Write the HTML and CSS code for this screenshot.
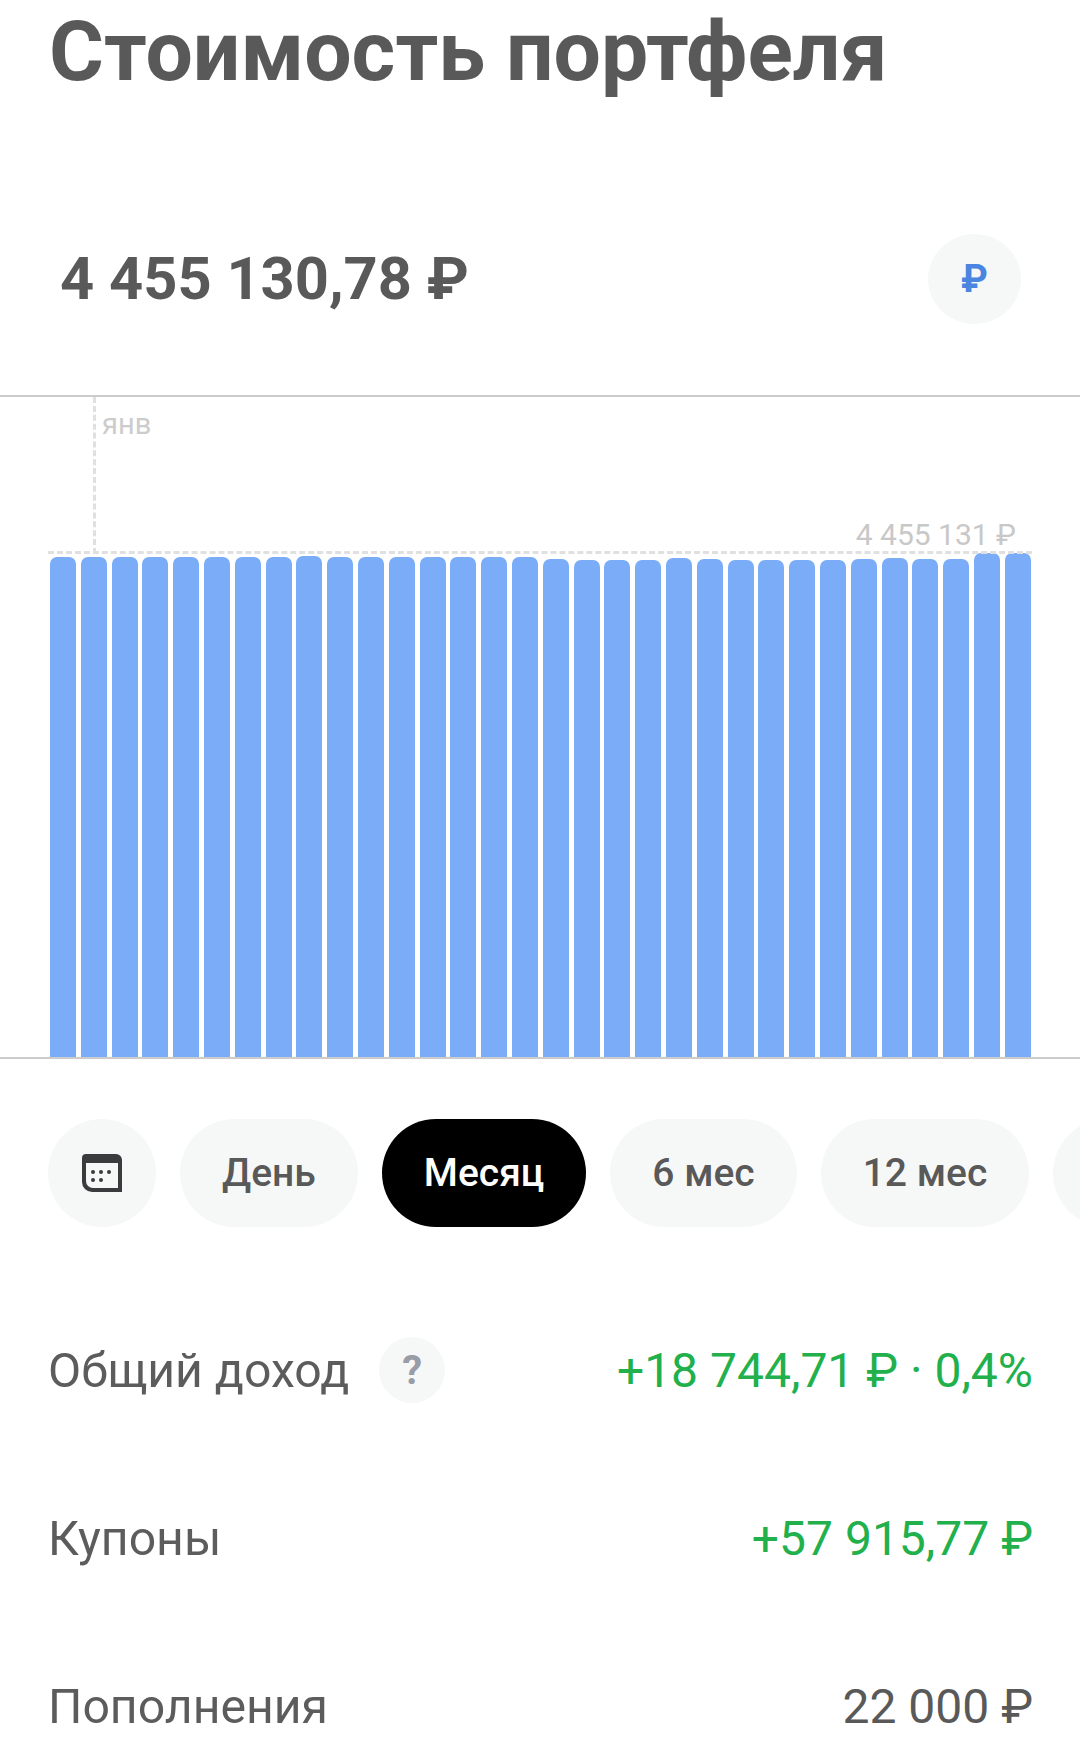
FILE: index.html
```html
<!DOCTYPE html>
<html lang="ru">
<head>
    <meta charset="UTF-8">
    <meta name="viewport" content="width=device-width, initial-scale=1.0">
    <title>Стоимость портфеля</title>
    <link rel="stylesheet" href="styles.css">
</head>
<body>
    <h1 class="title">Стоимость портфеля</h1>

    <div class="total">
        <span class="total-value">4 455 130,78 ₽</span>
        <span class="currency">₽</span>
    </div>

    <div class="chart">
        <div class="month-mark"><span>янв</span></div>
        <div class="max-line"></div>
        <div class="max-label">4 455 131 ₽</div>
        <div class="bars">
            <i class="bar" style="height:500px"></i><i class="bar" style="height:500px"></i><i class="bar" style="height:500px"></i><i class="bar" style="height:500px"></i>
            <i class="bar" style="height:500px"></i><i class="bar" style="height:500px"></i><i class="bar" style="height:500px"></i><i class="bar" style="height:500px"></i>
            <i class="bar" style="height:501px"></i><i class="bar" style="height:500px"></i><i class="bar" style="height:500px"></i><i class="bar" style="height:500px"></i>
            <i class="bar" style="height:500px"></i><i class="bar" style="height:500px"></i><i class="bar" style="height:500px"></i><i class="bar" style="height:500px"></i>
            <i class="bar" style="height:498px"></i><i class="bar" style="height:497px"></i><i class="bar" style="height:497px"></i><i class="bar" style="height:497.5px"></i>
            <i class="bar" style="height:499px"></i><i class="bar" style="height:498px"></i><i class="bar" style="height:497.5px"></i><i class="bar" style="height:497.5px"></i>
            <i class="bar" style="height:497.5px"></i><i class="bar" style="height:497.5px"></i><i class="bar" style="height:498.5px"></i><i class="bar" style="height:499px"></i>
            <i class="bar" style="height:498.5px"></i><i class="bar" style="height:498px"></i><i class="bar" style="height:504px"></i><i class="bar" style="height:504px"></i>
        </div>
    </div>

    <div class="periods">
        <span class="pill pill-icon">
            <svg width="40" height="38" viewBox="0 0 40 38">
                <path d="M0 4a4 4 0 0 1 4-4h30a6 6 0 0 1 6 6v32H10a10 10 0 0 1-10-10z" fill="#3a3b3d"/>
                <path d="M4 9h32v25H11a7 7 0 0 1-7-7z" fill="#f6f8f8"/>
                <g fill="#3a3b3d">
                    <circle cx="11" cy="18" r="2"/><circle cx="19" cy="18" r="2"/><circle cx="27" cy="18" r="2"/>
                    <circle cx="11" cy="26" r="2"/><circle cx="19" cy="26" r="2"/>
                </g>
            </svg>
        </span>
        <span class="pill">День</span>
        <span class="pill pill-active">Месяц</span>
        <span class="pill">6 мес</span>
        <span class="pill">12 мес</span>
        <span class="pill pill-cut"></span>
    </div>

    <div class="row row-first">
        <span class="row-label">Общий доход <span class="hint">?</span></span>
        <span class="row-value green">+18 744,71 ₽ · 0,4%</span>
    </div>
    <div class="row">
        <span class="row-label">Купоны</span>
        <span class="row-value green">+57 915,77 ₽</span>
    </div>
    <div class="row">
        <span class="row-label">Пополнения</span>
        <span class="row-value">22 000 ₽</span>
    </div>
</body>
</html>
```

FILE: styles.css
```css
html, body {
    margin: 0;
    padding: 0;
}
body {
    width: 1080px;
    height: 1752px;
    overflow: hidden;
    background-color: #fff;
    color: #595959;
    font-family: Roboto, "Noto Sans", sans-serif;
}
.title {
    margin: 0;
    padding-left: 49px;
    height: 104px;
    font-size: 84px;
    line-height: 104px;
    font-weight: 700;
    white-space: nowrap;
}

.total {
    display: flex;
    align-items: center;
    justify-content: space-between;
    height: 90px;
    margin-top: 130px;
    padding: 0 59px 0 60px;
}
.total-value {
    font-size: 59.6px;
    font-weight: 700;
}
.currency {
    display: flex;
    align-items: center;
    justify-content: center;
    width: 93px;
    height: 90px;
    border-radius: 50%;
    background-color: #f6f8f8;
    color: #4a86e0;
    font-size: 38px;
    font-weight: 700;
}

.chart {
    position: relative;
    height: 660px;
    margin-top: 71px;
    border-top: 2px solid #ccc;
    border-bottom: 2px solid #ccc;
}
.bars {
    display: flex;
    gap: 4.8px;
    align-items: flex-end;
    height: 100%;
    padding-left: 50px;
}
.bar {
    display: block;
    flex: 0 0 26px;
    background-color: #7aacf8;
    border-radius: 7px 7px 0 0;
}

.month-mark {
    position: absolute;
    left: 93px;
    top: 0;
    height: 157px;
    border-left: 3px dashed #e0e0e0;
}
.month-mark span {
    display: block;
    padding: 10px 0 0 6px;
    color: #ccc;
    font-size: 29px;
    line-height: 34px;
}
.max-line {
    position: absolute;
    left: 48px;
    right: 48px;
    top: 154px;
    border-top: 3px dashed #e0e0e0;
}
.max-label {
    position: absolute;
    right: 64px;
    top: 121px;
    color: #c8c8c8;
    font-size: 30px;
    line-height: 34px;
}

.periods {
    display: flex;
    gap: 24px;
    margin-top: 60px;
    padding-left: 48px;
    overflow: hidden;
}
.pill {
    display: flex;
    flex: none;
    align-items: center;
    padding: 0 42px;
    height: 108px;
    border-radius: 54px;
    background-color: #f6f8f8;
    font-size: 39px;
    font-weight: 500;
}
.pill-icon {
    justify-content: center;
    width: 108px;
    padding: 0;
}
.pill-active {
    background-color: #000;
    color: #fff;
}
.pill-cut {
    width: 60px;
}

.row {
    display: flex;
    align-items: center;
    justify-content: space-between;
    height: 68px;
    margin-top: 100px;
    padding: 0 47px 0 48px;
    font-size: 48px;
    white-space: nowrap;
}
.row-first {
    margin-top: 109px;
}
.row-label {
    display: flex;
    align-items: center;
    font-size: 48.2px;
    color: #5c5c5c;
}
.hint {
    display: flex;
    align-items: center;
    justify-content: center;
    width: 66px;
    height: 66px;
    margin-left: 30px;
    border-radius: 50%;
    background-color: #f6f8f8;
    color: #9a9ca6;
    font-size: 40px;
    font-weight: 700;
}
.green {
    color: #21b04b;
}
```
